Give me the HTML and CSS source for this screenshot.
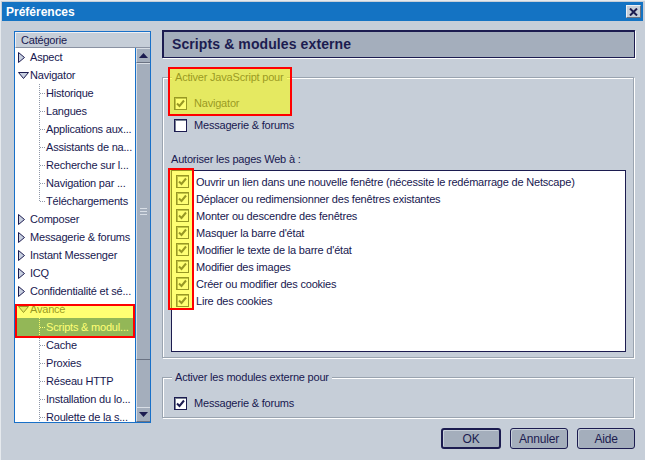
FILE: index.html
```html
<!DOCTYPE html>
<html lang="fr">
<head>
<meta charset="utf-8">
<title>Préférences</title>
<link rel="stylesheet" href="styles.css">
</head>
<body>
<div class="window">
  <div class="titlebar">
    <span class="title">Préférences</span>
    <span class="close"><svg width="9" height="8" viewBox="0 0 9 8"><path d="M1 0.5 L8 7.5 M8 0.5 L1 7.5" stroke="#1c1c50" stroke-width="2"/></svg></span>
  </div>
  <div class="main">
    <div class="tree">
      <div class="tree-head">Catégorie</div>
      <div class="tree-body">
        <div class="tree-list">
          <div class="row"><span class="tw"><svg width="7" height="11" viewBox="0 0 7 11"><polygon points="0.5,0.5 6.5,5.5 0.5,10.5" fill="#c8d0e0" stroke="#1c1c50"/></svg></span>Aspect</div>
          <div class="row"><span class="tw"><svg width="11" height="7" viewBox="0 0 11 7"><polygon points="0.5,0.5 10.5,0.5 5.5,6.5" fill="#c8d0e0" stroke="#1c1c50"/></svg></span>Navigator</div>
          <div class="row child">Historique</div>
          <div class="row child">Langues</div>
          <div class="row child">Applications aux...</div>
          <div class="row child">Assistants de na...</div>
          <div class="row child">Recherche sur l...</div>
          <div class="row child">Navigation par ...</div>
          <div class="row child last">Téléchargements</div>
          <div class="row"><span class="tw"><svg width="7" height="11" viewBox="0 0 7 11"><polygon points="0.5,0.5 6.5,5.5 0.5,10.5" fill="#c8d0e0" stroke="#1c1c50"/></svg></span>Composer</div>
          <div class="row"><span class="tw"><svg width="7" height="11" viewBox="0 0 7 11"><polygon points="0.5,0.5 6.5,5.5 0.5,10.5" fill="#c8d0e0" stroke="#1c1c50"/></svg></span>Messagerie &amp; forums</div>
          <div class="row"><span class="tw"><svg width="7" height="11" viewBox="0 0 7 11"><polygon points="0.5,0.5 6.5,5.5 0.5,10.5" fill="#c8d0e0" stroke="#1c1c50"/></svg></span>Instant Messenger</div>
          <div class="row"><span class="tw"><svg width="7" height="11" viewBox="0 0 7 11"><polygon points="0.5,0.5 6.5,5.5 0.5,10.5" fill="#c8d0e0" stroke="#1c1c50"/></svg></span>ICQ</div>
          <div class="row"><span class="tw"><svg width="7" height="11" viewBox="0 0 7 11"><polygon points="0.5,0.5 6.5,5.5 0.5,10.5" fill="#c8d0e0" stroke="#1c1c50"/></svg></span>Confidentialité et sé...</div>
          <div class="row"><span class="tw"><svg width="11" height="7" viewBox="0 0 11 7"><polygon points="0.5,0.5 10.5,0.5 5.5,6.5" fill="#c8d0e0" stroke="#1c1c50"/></svg></span>Avancé</div>
          <div class="row child selected"><span class="sel">Scripts &amp; modul...</span></div>
          <div class="row child">Cache</div>
          <div class="row child">Proxies</div>
          <div class="row child">Réseau HTTP</div>
          <div class="row child">Installation du lo...</div>
          <div class="row child">Roulette de la s...</div>
        </div>
        <div class="scrollbar">
          <div class="sb-btn"><svg width="9" height="5" viewBox="0 0 9 5"><polygon points="4.5,0 9,5 0,5" fill="#1c1c50"/></svg></div>
          <div class="sb-thumb"><span class="grip"></span></div>
          <div class="sb-track"></div>
          <div class="sb-btn"><svg width="9" height="5" viewBox="0 0 9 5"><polygon points="0,0 9,0 4.5,5" fill="#1c1c50"/></svg></div>
        </div>
      </div>
    </div>

    <div class="panel">
      <div class="panel-head">Scripts &amp; modules externe</div>

      <div class="group g1">
        <span class="legend">Activer JavaScript pour</span>
        <div class="opt first"><span class="cb"><svg width="11" height="11" viewBox="0 0 11 11"><path d="M2 5.5 L4.5 8 L9 2.5" fill="none" stroke="#1c1c50" stroke-width="2"/></svg></span>Navigator</div>
        <div class="opt"><span class="cb"></span>Messagerie &amp; forums</div>
        <div class="list-label">Autoriser les pages Web à :</div>
        <div class="listbox">
          <div class="lrow"><span class="cb"><svg width="11" height="11" viewBox="0 0 11 11"><path d="M2 5.5 L4.5 8 L9 2.5" fill="none" stroke="#1c1c50" stroke-width="2"/></svg></span>Ouvrir un lien dans une nouvelle fenêtre (nécessite le redémarrage de Netscape)</div>
          <div class="lrow"><span class="cb"><svg width="11" height="11" viewBox="0 0 11 11"><path d="M2 5.5 L4.5 8 L9 2.5" fill="none" stroke="#1c1c50" stroke-width="2"/></svg></span>Déplacer ou redimensionner des fenêtres existantes</div>
          <div class="lrow"><span class="cb"><svg width="11" height="11" viewBox="0 0 11 11"><path d="M2 5.5 L4.5 8 L9 2.5" fill="none" stroke="#1c1c50" stroke-width="2"/></svg></span>Monter ou descendre des fenêtres</div>
          <div class="lrow"><span class="cb"><svg width="11" height="11" viewBox="0 0 11 11"><path d="M2 5.5 L4.5 8 L9 2.5" fill="none" stroke="#1c1c50" stroke-width="2"/></svg></span>Masquer la barre d'état</div>
          <div class="lrow"><span class="cb"><svg width="11" height="11" viewBox="0 0 11 11"><path d="M2 5.5 L4.5 8 L9 2.5" fill="none" stroke="#1c1c50" stroke-width="2"/></svg></span>Modifier le texte de la barre d'état</div>
          <div class="lrow"><span class="cb"><svg width="11" height="11" viewBox="0 0 11 11"><path d="M2 5.5 L4.5 8 L9 2.5" fill="none" stroke="#1c1c50" stroke-width="2"/></svg></span>Modifier des images</div>
          <div class="lrow"><span class="cb"><svg width="11" height="11" viewBox="0 0 11 11"><path d="M2 5.5 L4.5 8 L9 2.5" fill="none" stroke="#1c1c50" stroke-width="2"/></svg></span>Créer ou modifier des cookies</div>
          <div class="lrow"><span class="cb"><svg width="11" height="11" viewBox="0 0 11 11"><path d="M2 5.5 L4.5 8 L9 2.5" fill="none" stroke="#1c1c50" stroke-width="2"/></svg></span>Lire des cookies</div>
        </div>
      </div>

      <div class="group g2">
        <span class="legend">Activer les modules externe pour</span>
        <div class="opt first"><span class="cb"><svg width="11" height="11" viewBox="0 0 11 11"><path d="M2 5.5 L4.5 8 L9 2.5" fill="none" stroke="#1c1c50" stroke-width="2"/></svg></span>Messagerie &amp; forums</div>
      </div>

      <div class="buttons">
        <button class="btn default">OK</button>
        <button class="btn">Annuler</button>
        <button class="btn">Aide</button>
      </div>
    </div>
  </div>

  <div class="hl hl-tree"></div>
  <div class="hl hl-js"></div>
  <div class="hl hl-list"></div>
</div>
</body>
</html>
```

FILE: styles.css
```css
html, body {
  margin: 0;
  padding: 0;
  background: #c6ced8;
}
body {
  font-family: "Liberation Sans", Arial, sans-serif;
  font-size: 11px;
  letter-spacing: -0.2px;
  color: #181850;
}
.window {
  position: relative;
  width: 645px;
  height: 460px;
  box-sizing: border-box;
  padding: 1px 2px 2px 1px;
  border-top: 1px solid #e6eaee;
  border-left: 1px solid #e6eaee;
  overflow: hidden;
}
.titlebar {
  height: 19px;
  background: #1473c3;
  display: flex;
  align-items: center;
  justify-content: space-between;
  padding: 0 2px 0 4px;
}
.title {
  color: #fff;
  font-weight: bold;
  font-size: 12px;
  letter-spacing: 0;
}
.close {
  width: 15px;
  height: 13px;
  box-sizing: border-box;
  background: #c6ced8;
  border-top: 1px solid #eef0f4;
  border-left: 1px solid #eef0f4;
  border-right: 1px solid #6a7282;
  border-bottom: 1px solid #6a7282;
  display: flex;
  align-items: center;
  justify-content: center;
}
.main {
  display: flex;
  padding: 9px 0 0 12px;
}
.tree {
  width: 137px;
  height: 392px;
  margin-top: 1px;
  box-sizing: border-box;
  border: 1px solid #1870c8;
  background: #fff;
  display: flex;
  flex-direction: column;
}
.tree-head {
  height: 16px;
  box-sizing: border-box;
  background: #c6ced8;
  border-top: 1px solid #eef0f4;
  border-left: 1px solid #eef0f4;
  border-bottom: 1px solid #8a92a2;
  padding-left: 5px;
  line-height: 14px;
}
.tree-body {
  flex: 1;
  display: flex;
  min-height: 0;
}
.tree-list {
  flex: 1;
  overflow: hidden;
}
.row {
  height: 18px;
  display: flex;
  align-items: center;
  padding-left: 3px;
  white-space: nowrap;
}
.tw {
  width: 12px;
  display: flex;
  align-items: center;
}
.row.child {
  padding-left: 31px;
  background:
    repeating-linear-gradient(to right, #9098a8 0 1px, transparent 1px 2px) 25px 9px / 6px 1px no-repeat,
    repeating-linear-gradient(to bottom, #9098a8 0 1px, transparent 1px 2px) 24px 0 / 1px 18px no-repeat;
}
.row.child.last {
  background:
    repeating-linear-gradient(to right, #9098a8 0 1px, transparent 1px 2px) 25px 9px / 6px 1px no-repeat,
    repeating-linear-gradient(to bottom, #9098a8 0 1px, transparent 1px 2px) 24px 0 / 1px 10px no-repeat;
}
.row.selected {
  padding-left: 0;
  background: #fff;
}
.sel {
  flex: 1;
  height: 18px;
  display: flex;
  align-items: center;
  padding-left: 31px;
  color: #fff;
  background:
    repeating-linear-gradient(to right, #ffffff 0 1px, transparent 1px 2px) 25px 9px / 6px 1px no-repeat,
    repeating-linear-gradient(to bottom, #ffffff 0 1px, transparent 1px 2px) 24px 0 / 1px 18px no-repeat,
    #1060c0;
}
.scrollbar {
  width: 14px;
  border-left: 1px solid #1870c8;
  display: flex;
  flex-direction: column;
  background: #a4aebc;
}
.sb-btn {
  height: 15px;
  box-sizing: border-box;
  display: flex;
  align-items: center;
  justify-content: center;
  background: #a4aebc;
  border-top: 1px solid #d8dee6;
  border-left: 1px solid #d8dee6;
  border-bottom: 1px solid #6a7282;
}
.sb-thumb {
  height: 297px;
  box-sizing: border-box;
  border-top: 1px solid #d8dee6;
  border-left: 1px solid #d8dee6;
  border-bottom: 1px solid #6a7282;
  display: flex;
  align-items: center;
  justify-content: center;
}
.grip {
  width: 7px;
  height: 5px;
  border-top: 1px solid #d8dee6;
  border-bottom: 1px solid #d8dee6;
  background: linear-gradient(#d8dee6, #d8dee6) 0 2px / 7px 1px no-repeat;
}
.sb-track {
  flex: 1;
  background: #a4aebc;
  border-left: 1px solid #d8dee6;
}
.panel {
  width: 475px;
  margin-left: 11px;
  display: flex;
  flex-direction: column;
}
.panel-head {
  height: 28px;
  box-sizing: border-box;
  width: 473px;
  background: #a4aebc;
  border: 1px solid #1c1c50;
  box-shadow: inset 1px 1px 0 #1c1c50, 1px 1px 0 #fff;
  padding-left: 9px;
  display: flex;
  align-items: center;
  font-size: 14px;
  font-weight: bold;
  color: #1c1c50;
  letter-spacing: 0.1px;
}
.group {
  width: 472px;
  box-sizing: border-box;
  margin-top: 19px;
  border: 1px solid #9aa4b0;
  box-shadow: inset 1px 1px 0 #fff, 1px 1px 0 #fff;
  padding: 0 0 5px 11px;
}
.g2 {
  padding-bottom: 3px;
}
.legend {
  display: block;
  width: fit-content;
  margin: -8px 0 0 -2px;
  padding: 0 3px;
  line-height: 14px;
  background: #c6ced8;
}
.opt {
  height: 22px;
  display: flex;
  align-items: center;
}
.opt.first {
  margin-top: 8px;
}
.cb {
  width: 13px;
  height: 13px;
  box-sizing: border-box;
  border: 1px solid #1c1c50;
  box-shadow: inset 1px 1px 0 #7a8294;
  background: #fff;
  margin-right: 7px;
  display: flex;
  align-items: center;
  justify-content: center;
  flex: none;
}
.list-label {
  margin: 16px 0 0 -3px;
  line-height: 14px;
}
.listbox {
  margin: 4px 0 0 -3px;
  width: 455px;
  height: 182px;
  box-sizing: border-box;
  border: 1px solid #1c1c50;
  background: #fff;
  padding: 2px 0 0 4px;
}
.lrow {
  height: 17px;
  display: flex;
  align-items: center;
  white-space: nowrap;
}
.buttons {
  display: flex;
  justify-content: flex-end;
  gap: 9px;
  margin: 10px 2px 0 0;
}
.btn {
  font-family: "Liberation Sans", Arial, sans-serif;
  font-size: 12px;
  letter-spacing: -0.2px;
  color: #1c1c50;
  height: 21px;
  width: 58px;
  padding: 0;
  border: 1px solid #1c1c50;
  border-radius: 3px;
  background: #a4aebc;
  box-shadow: inset 1px 1px 0 #c8d0da;
}
.btn.default {
  width: 60px;
  border-width: 2px;
}
.hl {
  position: absolute;
  box-sizing: border-box;
  border: 2px solid #ff0000;
  background: rgba(255, 255, 0, 0.55);
}
.hl-tree {
  left: 14px;
  top: 303px;
  width: 120px;
  height: 34px;
}
.hl-js {
  left: 167px;
  top: 66px;
  width: 124px;
  height: 49px;
}
.hl-list {
  left: 167px;
  top: 167px;
  width: 26px;
  height: 142px;
}
```
